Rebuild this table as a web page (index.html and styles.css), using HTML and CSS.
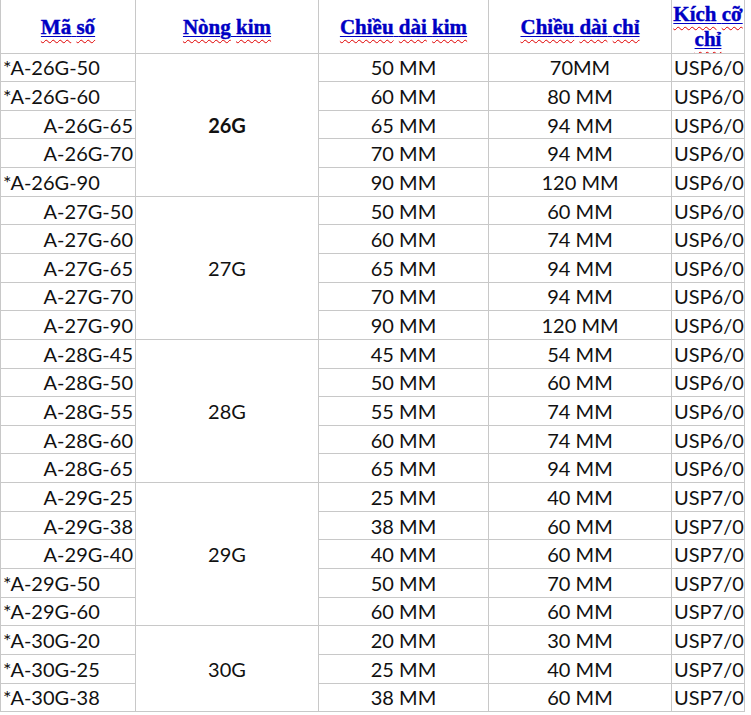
FILE: index.html
```html
<!DOCTYPE html>
<html lang="vi">
<head>
<meta charset="utf-8">
<title>Bảng kim</title>
<link rel="stylesheet" href="styles.css">
</head>
<body>
<table class="sheet">
  <colgroup>
    <col class="c1"><col class="c2"><col class="c3"><col class="c4"><col class="c5">
  </colgroup>
  <thead>
    <tr class="head">
      <th><span class="u"><span class="w">Mã</span> <span class="w">số</span></span></th>
      <th><span class="u"><span class="w">Nòng</span> <span class="w">kim</span></span></th>
      <th><span class="u"><span class="w">Chiều</span> <span class="w">dài</span> <span class="w">kim</span></span></th>
      <th><span class="u"><span class="w">Chiều</span> <span class="w">dài</span> <span class="w">chỉ</span></span></th>
      <th class="wrap"><span class="u"><span class="w">Kích</span> <span class="w">cỡ</span><br><span class="w">chỉ</span></span></th>
    </tr>
  </thead>
  <tbody>
    <tr><td class="l">*A-26G-50</td><td class="g b" rowspan="5">26G</td><td class="m">50 MM</td><td class="m">70MM</td><td class="s">USP6/0</td></tr>
    <tr><td class="l">*A-26G-60</td><td class="m">60 MM</td><td class="m">80 MM</td><td class="s">USP6/0</td></tr>
    <tr><td class="r">A-26G-65</td><td class="m">65 MM</td><td class="m">94 MM</td><td class="s">USP6/0</td></tr>
    <tr><td class="r">A-26G-70</td><td class="m">70 MM</td><td class="m">94 MM</td><td class="s">USP6/0</td></tr>
    <tr><td class="l">*A-26G-90</td><td class="m">90 MM</td><td class="m">120 MM</td><td class="s">USP6/0</td></tr>

    <tr><td class="r">A-27G-50</td><td class="g" rowspan="5">27G</td><td class="m">50 MM</td><td class="m">60 MM</td><td class="s">USP6/0</td></tr>
    <tr><td class="r">A-27G-60</td><td class="m">60 MM</td><td class="m">74 MM</td><td class="s">USP6/0</td></tr>
    <tr><td class="r">A-27G-65</td><td class="m">65 MM</td><td class="m">94 MM</td><td class="s">USP6/0</td></tr>
    <tr><td class="r">A-27G-70</td><td class="m">70 MM</td><td class="m">94 MM</td><td class="s">USP6/0</td></tr>
    <tr><td class="r">A-27G-90</td><td class="m">90 MM</td><td class="m">120 MM</td><td class="s">USP6/0</td></tr>

    <tr><td class="r">A-28G-45</td><td class="g" rowspan="5">28G</td><td class="m">45 MM</td><td class="m">54 MM</td><td class="s">USP6/0</td></tr>
    <tr><td class="r">A-28G-50</td><td class="m">50 MM</td><td class="m">60 MM</td><td class="s">USP6/0</td></tr>
    <tr><td class="r">A-28G-55</td><td class="m">55 MM</td><td class="m">74 MM</td><td class="s">USP6/0</td></tr>
    <tr><td class="r">A-28G-60</td><td class="m">60 MM</td><td class="m">74 MM</td><td class="s">USP6/0</td></tr>
    <tr><td class="r">A-28G-65</td><td class="m">65 MM</td><td class="m">94 MM</td><td class="s">USP6/0</td></tr>

    <tr><td class="r">A-29G-25</td><td class="g" rowspan="5">29G</td><td class="m">25 MM</td><td class="m">40 MM</td><td class="s">USP7/0</td></tr>
    <tr><td class="r">A-29G-38</td><td class="m">38 MM</td><td class="m">60 MM</td><td class="s">USP7/0</td></tr>
    <tr><td class="r">A-29G-40</td><td class="m">40 MM</td><td class="m">60 MM</td><td class="s">USP7/0</td></tr>
    <tr><td class="l">*A-29G-50</td><td class="m">50 MM</td><td class="m">70 MM</td><td class="s">USP7/0</td></tr>
    <tr><td class="l">*A-29G-60</td><td class="m">60 MM</td><td class="m">60 MM</td><td class="s">USP7/0</td></tr>

    <tr><td class="l">*A-30G-20</td><td class="g" rowspan="3">30G</td><td class="m">20 MM</td><td class="m">30 MM</td><td class="s">USP7/0</td></tr>
    <tr><td class="l">*A-30G-25</td><td class="m">25 MM</td><td class="m">40 MM</td><td class="s">USP7/0</td></tr>
    <tr><td class="l">*A-30G-38</td><td class="m">38 MM</td><td class="m">60 MM</td><td class="s">USP7/0</td></tr>
  </tbody>
</table>
</body>
</html>
```

FILE: styles.css
```css
html, body {
  margin: 0;
  padding: 0;
  background: #ffffff;
}

.sheet {
  border-collapse: collapse;
  table-layout: fixed;
  width: 744px;
  font-family: "Lato", "Open Sans", sans-serif;
  font-size: 20px;
  color: #111111;
}

.c1 { width: 135px; }
.c2 { width: 183px; }
.c3 { width: 170px; }
.c4 { width: 183px; }
.c5 { width: 73px; }

.sheet td,
.sheet th {
  border: 1px solid #c8c8c8;
  padding: 0 2px;
  white-space: nowrap;
  overflow: hidden;
  vertical-align: middle;
  line-height: 24px;
}

.sheet thead th {
  border-top: none;
  font-family: "Liberation Serif", "Times New Roman", serif;
  font-weight: bold;
  font-size: 21px;
  color: #0000c4;
  text-align: center;
  padding: 1px 0 0;
  -webkit-text-stroke: 0.4px #0000c4;
}

.sheet thead th.wrap {
  line-height: 25px;
  padding: 2px 0 0;
}

.head { height: 53px; }

.sheet tbody tr { height: 28.65px; }

.u {
  text-decoration: underline;
  text-decoration-color: #0000c4;
  text-decoration-thickness: 1px;
  text-underline-offset: 2px;
}

.w {
  text-decoration: underline wavy #e00000;
  text-decoration-thickness: 1px;
  text-underline-offset: 5px;
}

.l { text-align: left; }
.r { text-align: right; }
.m { text-align: center; }
.g { text-align: center; }
.b { font-weight: bold; }
.s { text-align: left; padding: 0 0 0 1px; }
```
